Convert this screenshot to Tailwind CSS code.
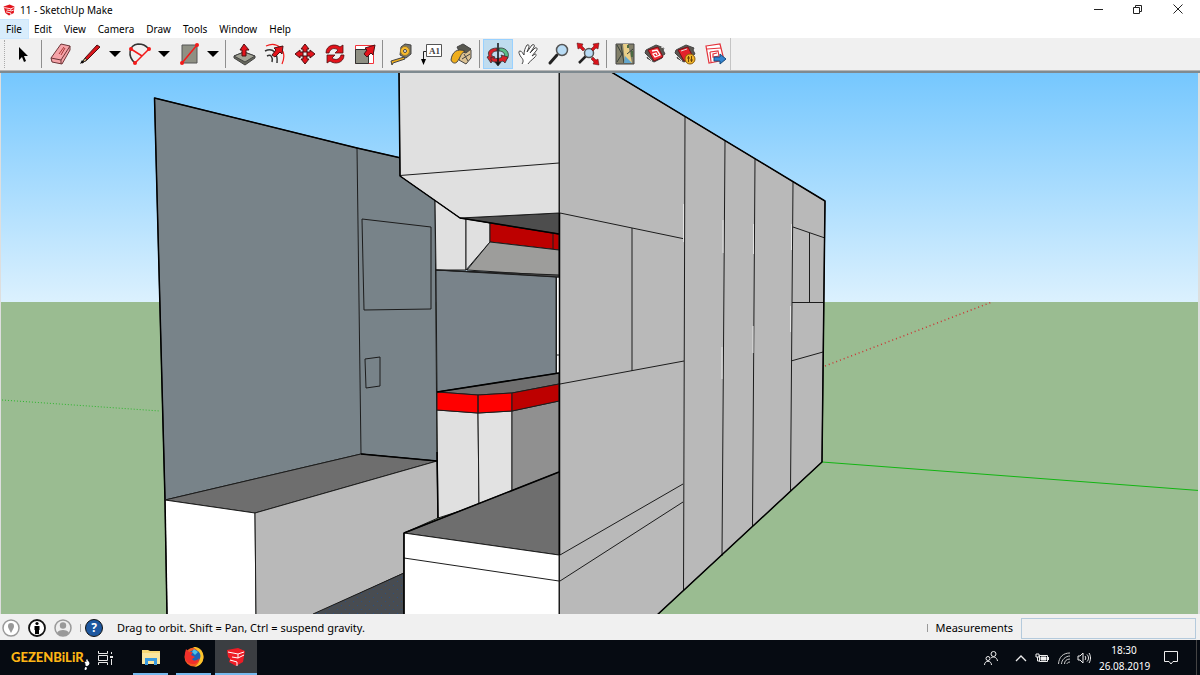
<!DOCTYPE html>
<html lang="en">
<head>
    <meta charset="UTF-8">
    <meta name="viewport" content="width=device-width, initial-scale=1.0">
    <title>11 - SketchUp Make</title>
    <script src="https://cdn.jsdelivr.net/npm/@tailwindcss/browser@4"></script>
</head>
<body class="flex min-h-screen flex-col bg-[#f0f0f0] font-['Noto_Sans',sans-serif] text-[11px] text-black">

    <!-- Title bar -->
    <header class="flex h-5 items-center bg-white pr-[2px] pl-[3px] text-[10px]">
        <svg class="h-3 w-3" viewBox="0 0 20 20">
            <path d="M1 4l10-3 8 3-1 11-8 4-6-4z" fill="#e3131b"/>
            <path d="M2 6l11 2v3L6 10M5 13l8 2v3M13 8l5-2M13 12l5-2" fill="none" stroke="#fff" stroke-width="1.500"/>
        </svg>
        <h1 class="ml-[5px] leading-5">11 - SketchUp Make</h1>
        <div class="ml-auto flex">
            <button class="flex h-5 w-10 items-center justify-center" aria-label="Minimize">
                <svg class="h-3 w-3" viewBox="0 0 12 12" fill="none" stroke="#222"><path d="M2 5.500h9"/></svg>
            </button>
            <button class="flex h-5 w-10 items-center justify-center" aria-label="Restore">
                <svg class="h-3 w-3" viewBox="0 0 12 12" fill="none" stroke="#222"><path d="M1.500 3.500h6v6h-6zM3.500 3V1.500h6v6H8"/></svg>
            </button>
            <button class="flex h-5 w-10 items-center justify-center" aria-label="Close">
                <svg class="h-3 w-3" viewBox="0 0 12 12" fill="none" stroke="#222"><path d="M1.500 .5l9 9M10.500 .5l-9 9"/></svg>
            </button>
        </div>
    </header>

    <!-- Menu -->
    <nav class="flex h-[18px] bg-white text-[10px] leading-[17px]">
        <button class="bg-[#d9edfc] px-[6px] outline outline-[#cce8ff]">File</button>
        <button class="px-[6px]">Edit</button>
        <button class="px-[6px]">View</button>
        <button class="px-[6px]">Camera</button>
        <button class="px-[6px]">Draw</button>
        <button class="px-[6px]">Tools</button>
        <button class="px-[6px]">Window</button>
        <button class="px-[6px]">Help</button>
    </nav>

    <!-- Toolbar -->
    <div class="flex h-[33px] border-b border-[#b5b5b5]">
        <div class="flex items-center border-r border-[#c4c4c4] pl-1" role="toolbar" aria-label="Getting Started">
            <span class="h-7 w-1 border-l border-dotted border-[#aaa]"></span>
            <button class="flex h-[30px] w-[30px] items-center justify-center" aria-label="Select">
                <svg class="h-6 w-6" viewBox="0 0 24 24"><path d="M8 5v13l3-3 2 5 2-1-2-5h4z" fill="#000"/></svg>
            </button>
            <span class="mx-[3px] h-7 w-px bg-[#8f8f8f]"></span>
            <button class="flex h-[30px] w-[30px] items-center justify-center" aria-label="Eraser">
                <svg class="h-6 w-6" viewBox="0 0 24 24" stroke="#6d3437">
                    <path d="M3 16 13 2l9 2v4l-8 14-10-2z" fill="#f5a3a8"/>
                    <path d="M3 16l10 2 9-14M13 18v4" fill="none"/>
                    <path d="M11 12l5-7M13 13l4-7" fill="none" stroke="#a33"/>
                </svg>
            </button>
            <button class="flex h-[30px] w-[30px] items-center justify-center" aria-label="Line">
                <svg class="h-6 w-6" viewBox="0 0 24 24">
                    <path d="M4 21l3-5L19 3l3 2L9 18z" fill="#d9151b" stroke="#4c1113"/>
                    <path d="M4 21l3-5 2 2z" fill="#e0b676" stroke="#333"/>
                    <path d="M2 22l2-4 2 2z" fill="#000"/>
                </svg>
            </button>
            <button class="flex h-[30px] w-[19px] items-center justify-center" aria-label="Line options">
                <svg class="h-[6px] w-3" viewBox="0 0 12 6"><path d="M0 0h12L6 6z"/></svg>
            </button>
            <button class="flex h-[30px] w-[30px] items-center justify-center" aria-label="Arc">
                <svg class="h-6 w-6" viewBox="0 0 24 24" fill="none">
                    <path d="M8 21C0 14 2 3 11 2c5 0 7 1 11 5" stroke="#333" stroke-width="1.500"/>
                    <path d="M8 21 22 7M4 7l11 7" stroke="#f21b1b" stroke-width="1.500"/>
                    <g fill="#f21b1b"><circle cx="8" cy="21" r="2"/><circle cx="22" cy="7" r="2"/><circle cx="4" cy="7" r="2"/></g>
                </svg>
            </button>
            <button class="flex h-[30px] w-[19px] items-center justify-center" aria-label="Arc options">
                <svg class="h-[6px] w-3" viewBox="0 0 12 6"><path d="M0 0h12L6 6z"/></svg>
            </button>
            <button class="flex h-[30px] w-[30px] items-center justify-center" aria-label="Rectangle">
                <svg class="h-6 w-6" viewBox="0 0 24 24">
                    <path d="M6 3h15v18H6z" fill="#8f9084" stroke="#555"/>
                    <path d="M6 21 21 3" stroke="#f21b1b" stroke-width="1.500"/>
                    <g fill="#f21b1b"><circle cx="6" cy="21" r="2"/><circle cx="21" cy="3" r="2"/></g>
                </svg>
            </button>
            <button class="flex h-[30px] w-[19px] items-center justify-center" aria-label="Shape options">
                <svg class="h-[6px] w-3" viewBox="0 0 12 6"><path d="M0 0h12L6 6z"/></svg>
            </button>
            <span class="mx-[3px] h-7 w-px bg-[#8f8f8f]"></span>
            <button class="flex h-[30px] w-[30px] items-center justify-center" aria-label="Push/Pull">
                <svg class="h-6 w-6" viewBox="0 0 24 24" stroke="#444">
                    <path d="M2 14l10-4 11 4v2l-10 7L2 16z" fill="#66675c"/>
                    <path d="M2 14l10-4 11 4-10 6z" fill="#a3a496"/>
                    <path d="M10 14V8H8l4-6 5 6h-3v6z" fill="#e3131b" stroke="#4c1113"/>
                </svg>
            </button>
            <button class="flex h-[30px] w-[30px] items-center justify-center" aria-label="Offset">
                <svg class="h-6 w-6" viewBox="0 0 24 24" fill="none">
                    <path d="M4 4C15-1 26 8 20 22" stroke="#f21b1b" stroke-width="1.200"/>
                    <path d="M3 9c8-4 13 2 12 12M5 14c4-2 6 1 5 6" stroke="#333" stroke-width="1.500"/>
                    <path d="M10 13l4-5-2-2 9-2-1 8-2-2-5 5z" fill="#e3131b" stroke="#4c1113"/>
                </svg>
            </button>
            <button class="flex h-[30px] w-[30px] items-center justify-center" aria-label="Move">
                <svg class="h-6 w-6" viewBox="0 0 24 24" fill="#e3131b" stroke="#4c1113">
                    <path d="M13 2l4 5h-2v3h-4V7H9zM13 22l4-5h-2v-3h-4v3H9zM3 12l5-4v2h3v4H8v2zM23 12l-5-4v2h-3v4h3v2z"/>
                </svg>
            </button>
            <button class="flex h-[30px] w-[30px] items-center justify-center" aria-label="Rotate">
                <svg class="h-6 w-6" viewBox="0 0 24 24" fill="#e3131b" stroke="#4c1113" stroke-width=".8">
                    <path d="M4 11C4 3 13 1 18 5l3-2v8h-8l3-3c-4-3-8-1-9 3z"/>
                    <path d="M22 13c0 8-9 10-14 6l-3 2v-8h8l-3 3c4 3 8 1 9-3z"/>
                </svg>
            </button>
            <button class="flex h-[30px] w-[30px] items-center justify-center" aria-label="Scale">
                <svg class="h-6 w-6" viewBox="0 0 24 24">
                    <path d="M3.500 3.500h18v18h-18z" fill="#fff" stroke="#f3333b"/>
                    <path d="M3.500 7.500h13v14h-13z" fill="#8f9084" stroke="#333"/>
                    <path d="M12 12l3-4-2-2 10-3-2 10-2-2-4 4z" fill="#e3131b" stroke="#4c1113"/>
                </svg>
            </button>
            <span class="mx-[3px] h-7 w-px bg-[#8f8f8f]"></span>
            <button class="flex h-[30px] w-[30px] items-center justify-center" aria-label="Tape Measure">
                <svg class="h-6 w-6" viewBox="0 0 24 24" stroke="#444">
                    <path d="M2 19l13-4 1 2-12 4-1 2z" fill="#efae1c"/>
                    <path d="M12 5l4-3 6 1v9l-5 4-6-3z" fill="#777569"/>
                    <circle cx="16" cy="9" r="4.500" fill="#f7ba2e" stroke="#9b7a2a"/><circle cx="16" cy="9" r="1.500" fill="#fff"/>
                </svg>
            </button>
            <button class="flex h-[30px] w-[30px] items-center justify-center" aria-label="Text">
                <svg class="h-6 w-6" viewBox="0 0 24 24">
                    <path d="M7.500 2.500h15v12h-15z" fill="#fff" stroke="#555"/>
                    <path d="M7 9.500H4.500V19" fill="none" stroke="#222"/><path d="M2 17h5l-2.500 6z"/>
                    <text x="10" y="12" font-family="Liberation Serif" font-size="9" font-weight="700" fill="#444">A1</text>
                </svg>
            </button>
            <button class="flex h-[30px] w-[30px] items-center justify-center" aria-label="Paint Bucket">
                <svg class="h-6 w-6" viewBox="0 0 24 24" stroke="#444">
                    <path d="M10 9l5-6 7 5v8l-5 6-7-4z" fill="#dcc293"/>
                    <path d="M8 5l6-3 8 5-5 4-7-2z" fill="#575750"/>
                    <path d="M2 18C3 10 8 6 16 9c-5 3-4 6-8 11-2 2-5 1-6-2z" fill="#efae1c"/>
                    <path d="M13 17l8-5M15 12l4 7" fill="none"/>
                </svg>
            </button>
            <span class="mx-[3px] h-7 w-px bg-[#8f8f8f]"></span>
            <button class="flex h-[30px] w-[30px] items-center justify-center border border-[#99d1ff] bg-[#bfdcef]" aria-label="Orbit">
                <svg class="h-6 w-6 shrink-0" viewBox="0 0 24 24" stroke="#333" stroke-width=".8">
                    <path d="M13 6c9-1 12 8 7 12l-4-1v-3l2 1c2-3-1-6-5-6z" fill="#58bd86"/>
                    <path d="M11 6C4 6 1 10 3 14l-2 1 4 6 4-6-3-1c-1-2 1-5 5-5z" fill="#d82128"/>
                    <path d="M5 15c4 2 8 2 11 0l-1-2 7 2-3 6-2-2c-5 2-9 2-12-1z" fill="#d82128"/>
                    <path d="M12 1v21" stroke="#111" stroke-width="1.500"/>
                    <path d="M9 20h6l-3 4z" fill="#111"/>
                </svg>
            </button>
            <button class="flex h-[30px] w-[30px] items-center justify-center" aria-label="Pan">
                <svg class="h-6 w-6" viewBox="0 0 24 24">
                    <path d="M6 22c2-3 1-5-1-7-2-3-3-6-1-6 2 0 3 3 4 4 0-4 1-7 3-10 2-1 2 1 2 2l-2 5 5-7c2-1 3 0 2 2l-4 6 5-5c2-1 3 1 1 3l-4 5 3-2c2 0 1 2 0 3-3 3-6 5-7 7" fill="#fff" stroke="#444"/>
                </svg>
            </button>
            <button class="flex h-[30px] w-[30px] items-center justify-center" aria-label="Zoom">
                <svg class="h-6 w-6" viewBox="0 0 24 24">
                    <path d="M4 21l7-8" stroke="#222" stroke-width="3" stroke-linecap="round"/>
                    <circle cx="16" cy="8" r="5.500" fill="#b9dcf5" stroke="#555" stroke-width="1.500"/>
                </svg>
            </button>
            <button class="flex h-[30px] w-[30px] items-center justify-center" aria-label="Zoom Extents">
                <svg class="h-6 w-6" viewBox="0 0 24 24">
                    <path d="M3 21l7-7" stroke="#222" stroke-width="2.500"/>
                    <circle cx="13" cy="11" r="4.500" fill="#b9dcf5" stroke="#555" stroke-width="1.500"/>
                    <path d="M1 1l6 1-1 2 3 3-2 2-3-3-2 1zM23 1l-6 1 1 2-3 3 2 2 3-3 2 1zM23 23l-6-1 1-2-3-3 2-2 3 3 2-1z" fill="#d9131b" stroke="#4c1113" stroke-width=".5"/>
                </svg>
            </button>
            <span class="mx-[3px] h-7 w-px bg-[#8f8f8f]"></span>
            <button class="flex h-[30px] w-[30px] items-center justify-center" aria-label="Add Location">
                <svg class="h-6 w-6" viewBox="0 0 24 24">
                    <path d="M3 2h18v20H3z" fill="#83806a" stroke="#444"/>
                    <path d="M10 2h5l4 19h-7z" fill="#e9cf88"/>
                    <path d="M4 3l5 9-5 8M8 3l3 18M14 12l6-5" fill="none" stroke="#37403a"/>
                    <path d="M12 14l7 7h-8z" fill="#63a7cf"/>
                    <path d="M14 3h2v3h-2zM18 9h2v6h-2z" fill="#4b6b42"/>
                </svg>
            </button>
            <button class="flex h-[30px] w-[30px] items-center justify-center" aria-label="3D Warehouse">
                <svg class="h-6 w-6" viewBox="0 0 24 24" stroke="#444">
                    <path d="M3 8l10-5 8 3-1 2 2 4-3 2v2l-8 4-7-4 1-2-3-3z" fill="#5b5751"/>
                    <path d="M5 8l10-3 5 10-9 4z" fill="#ee2932" stroke="#7a1015"/>
                    <path d="M9 9l5-1 3 5-5 2-2-3 3-1 1 2" fill="none" stroke="#fff" stroke-width="1.300"/>
                    <path d="M4 14l5 5M18 5l3 1" stroke="#ddd"/>
                </svg>
            </button>
            <button class="flex h-[30px] w-[30px] items-center justify-center" aria-label="Extension Warehouse">
                <svg class="h-6 w-6" viewBox="0 0 24 24" stroke="#444">
                    <path d="M3 8l10-5 8 3-1 2 2 4-3 2v2l-8 4-7-4 1-2-3-3z" fill="#5b5751"/>
                    <path d="M5 8l10-3 5 10-9 4z" fill="#e3222b" stroke="#7a1015"/>
                    <path d="M8 9l6-2M4 14l5 5" stroke="#ddd"/>
                    <circle cx="17" cy="17" r="5" fill="#f2b52a" stroke="#8a5c0b"/>
                    <path d="M15.500 14v6M18.500 14v6M14 16h3M17 18h3" fill="none" stroke="#6a450a"/>
                </svg>
            </button>
            <button class="flex h-[30px] w-[30px] items-center justify-center" aria-label="LayOut">
                <svg class="h-6 w-6" viewBox="0 0 24 24">
                    <path d="M3 4l14-2 4 16-15 3z" fill="#fff" stroke="#e3333b" stroke-width="1.200"/>
                    <path d="M4 7l14-1M7 10l8-1 1 5-6 1v-3l4-1M7 10l1 10" fill="none" stroke="#e3333b" stroke-width="1.200"/>
                    <path d="M11 15h6v-3l6 5-6 5v-3h-6z" fill="#3385d0" stroke="#164a7c"/>
                </svg>
            </button>
        </div>
    </div>

    <!-- Model viewport -->
    <main class="flex flex-1 border-t-2 border-[#7f8a90] bg-[#dedede] pr-[2px] pl-px">
        <svg class="h-[541px] min-h-full w-full" viewBox="1 73 1197 541" preserveAspectRatio="none" role="img" aria-label="3D model">
            <defs>
                <linearGradient id="sky" x1="0" y1="0" x2="0" y2="1">
                    <stop offset="0" stop-color="#75c7fe"/>
                    <stop offset="1" stop-color="#dcf1fe"/>
                </linearGradient>
                <pattern id="dots" width="8" height="8" patternUnits="userSpaceOnUse">
                    <path d="M0 0h8v8H0z" fill="#484c51"/>
                    <path d="M1 1h1v1H1zM5 5h1v1H5z" fill="#2c4f7e"/>
                </pattern>
            </defs>
            <path d="M0 72h1200v231H0z" fill="url(#sky)"/>
            <path d="M0 302h1200v313H0z" fill="#9abc91"/>

            <!-- axes -->
            <path d="M2 400 160 411" stroke="#2cb52c" stroke-dasharray="1 2"/>
            <path d="M822 462 1199 490.500" stroke="#12b512"/>
            <path d="M825 366 992 302" stroke="#c33" stroke-dasharray="1 3" stroke-width="1.500"/>

            <g stroke="#1c1c1c" stroke-linejoin="round">
                <!-- left wall -->
                <path d="M154.500 98 357 148l44 10v18l34 23 2 262-76-7-196 46z" fill="#788389"/>
                <path d="M357 148l4 306M362 219l69 8v82l-67 1zM365 359l15-2v29l-14 2z" fill="none"/>
                <path d="M165 500 154.500 98 357 148l44 10" fill="none" stroke="#000" stroke-width="1.500"/>

                <!-- left bench -->
                <path d="M165 500l196-46 76 7-182 52z" fill="#6e6e6e"/>
                <path d="M165 500l90 13 1 102h-89z" fill="#fff"/>
                <path d="M255 513l182-52 1 57-34 15v40l-91 42h-57z" fill="#b9b9b9"/>
                <path d="M313 614l91-41v42h-91z" fill="url(#dots)"/>
                <path d="M165 500l2 115" stroke="#000" stroke-width="1.500"/>

                <!-- back opening -->
                <path d="M436 270l120 7v97l-119 18z" fill="#79838a"/>
                <path d="M556.500 277h3v97h-3zM556 355h3" fill="#fff"/>

                <!-- hood -->
                <path d="M435 199l31 20v51h-30z" fill="#e0e0e0"/>
                <path d="M466 218l24 5v19l-24 28z" fill="#e0e0e0"/>
                <path d="M490 223l69 11v16l-69-8z" fill="#bd0000"/>
                <path d="M490 242l69 8v26l-92-6z" fill="#9d9d9b"/>
                <path d="M553 234v15"/>
                <path d="M436 270l123 5v2l-63-4z" fill="#555"/>
                <path d="M460 218l99-5v21z" fill="#4d4d4d"/>

                <!-- upper cabinet -->
                <path d="M399 70h160v143l-99 5-60-42z" fill="#e0e0e0"/>
                <path d="M400 175.500l159-12.500"/>
                <path d="M399 70l1 106 60 42 99 16" fill="none" stroke="#000" stroke-width="1.500"/>

                <!-- red counter -->
                <path d="M437 392l122-19v11l-47 9-34 2z" fill="#6f6f6f"/>
                <path d="M437 410l41 3 1 92-41 13z" fill="#e0e0e0"/>
                <path d="M478 413l34-2v82l-33 13z" fill="#e2e2e2"/>
                <path d="M512 411l47-10v75l-47 18z" fill="#909090"/>
                <path d="M437 392l41 3v18l-41-3zM478 395l34-2v18l-34 2z" fill="#f00"/>
                <path d="M512 393l47-9v17l-47 10z" fill="#bd0000"/>
                <path d="M437 392l122-19M437 452l1 66M361 454l76 7" stroke="#000" stroke-width="1.500" fill="none"/>

                <!-- front bench -->
                <path d="M404 533l155-61v83z" fill="#6e6e6e"/>
                <path d="M404 533l155 22v60H404z" fill="#fff"/>
                <path d="M404 558l155 23"/>
                <path d="M404 615v-82l155-61" fill="none" stroke="#000" stroke-width="1.500"/>

                <!-- right wall -->
                <path d="M559.500 70H608l217 131-3 261-166 154h-96.500z" fill="#b9b9b9"/>
                <g fill="none">
                    <path d="M685 117l-1.500 474M725 141l-3 415M755 159l-2.500 368M793 182l-2.500 309"/>
                    <path d="M560 213l125 26M632 228v143M560 384l124-23M560 555l123-71M560 581l123-79"/>
                    <path d="M793 227l32 11M809.500 233v70M792 302.500h32M791 361l32-9"/>
                </g>
                <path d="M683.500 204v38M723 220v33M753.500 224v30M791.500 224v26M722 347v32M753 326v27M790.500 306v26" stroke="#e2e2e2"/>
                <path d="M608 70l217 131-3 261-166 154M559.500 213v342" fill="none" stroke="#000" stroke-width="1.500"/>
            </g>
        </svg>
    </main>

    <!-- Status bar -->
    <div class="flex h-[26px] items-center pt-[2px] pr-1 pl-[2px]">
        <button class="mr-2 h-[18px] w-[18px]" aria-label="Geo-location">
            <svg viewBox="0 0 18 18"><circle cx="9" cy="9" r="8" fill="#fff" stroke="#999" stroke-width="1.500"/><path d="M9 14C7 10 6 9 6 7a3 3 0 0 1 6 0c0 2-1 3-3 7z" fill="#999"/></svg>
        </button>
        <button class="mr-2 h-[18px] w-[18px]" aria-label="Credits">
            <svg viewBox="0 0 18 18"><circle cx="9" cy="9" r="8" fill="#fff" stroke="#111" stroke-width="1.800"/><circle cx="9" cy="4.500" r="1.600"/><path d="M6.500 7h5v4H11v4H7v-4h-.5z"/></svg>
        </button>
        <button class="mr-2 h-[18px] w-[18px]" aria-label="Sign in">
            <svg viewBox="0 0 18 18"><circle cx="9" cy="9" r="8" fill="#eee" stroke="#999" stroke-width="1.500"/><circle cx="9" cy="6.500" r="3.200" fill="#999"/><path d="M3 14c1-4 11-4 12 0-3 4-9 4-12 0z" fill="#999"/></svg>
        </button>
        <span class="mr-1 h-2 w-px bg-[#aaa]"></span>
        <button class="h-[18px] w-[18px] rounded-full border border-[#111] bg-[#1d579f] text-[12px] leading-4 font-bold text-white" aria-label="Help">?</button>
        <p class="ml-[14px]">Drag to orbit. Shift = Pan, Ctrl = suspend gravity.</p>
        <span class="ml-auto h-2 w-px bg-[#999]"></span>
        <label for="measurements" class="mx-2">Measurements</label>
        <input id="measurements" type="text" class="h-[21px] w-[175px] border border-[#b4cadc] bg-[#f0f0f0] px-1">
    </div>

    <!-- Taskbar -->
    <footer class="flex h-[35px] items-center bg-[#060b12] pl-[11px] text-[10px] text-white">
        <button class="flex w-[78px] items-center justify-between font-['Lato',sans-serif] text-[13px] font-black text-[#fdb515]" aria-label="Start">GEZENBiLiR
            <svg class="mt-3 h-3 w-[6px] shrink-0" viewBox="0 0 8 16"><path d="M2 10c-1-5 3-8 5-4 1 2-1 4-3 5zM2 12c2 0 3 3 0 4-2 0-1-3 0-4zM1 5h2v2H1zM3 2h2v2H3z" fill="#fff"/></svg>
        </button>
        <button class="ml-2 h-4 w-4" aria-label="Task View">
            <svg viewBox="0 0 16 16" fill="none" stroke="#e8e8e8"><path d="M1.500 1v2.500h9V1M1.500 5.500h9v5h-9zM1.500 15v-2.500h9V15M14.500 2v2M14.500 9v6"/><path d="M13 6h3v2h-3z" fill="#e8e8e8" stroke="none"/></svg>
        </button>
        <button class="ml-5 flex h-full w-[35px] items-center justify-center border-b-2 border-[#76b9ed]" aria-label="File Explorer">
            <svg class="h-5 w-5" viewBox="0 0 20 20"><path d="M1 3h6l2 1h10v13H1z" fill="#f9d976"/><path d="M1 6h18v11H1z" fill="#fbe69f"/><path d="M4 18v-7h12v7h-3v-4H7v4z" fill="#3a9be0"/></svg>
        </button>
        <button class="ml-2 flex h-full w-[35px] items-center justify-center border-b-2 border-[#76b9ed]" aria-label="Firefox">
            <svg class="h-5 w-5" viewBox="0 0 20 20">
                <circle cx="10" cy="10" r="9.500" fill="#f15b22"/>
                <path d="M9 0c8-1 12 7 10 13-1 4-5 7-9 7 7-4 9-14-1-20z" fill="#fbc52b"/>
                <circle cx="10.500" cy="9" r="6" fill="#1c63b7"/>
                <path d="M1 6l1-4 3 3 4 0-2 3 4 2-3 2c2 3 6 1 7-1 0 4-3 6-6 6C2 17 0 11 1 6z" fill="#f0302b"/>
                <path d="M8 5l2-3 4 3-3 3z" fill="#4cc0e8"/>
            </svg>
        </button>
        <button class="ml-1 flex h-full w-[42px] items-center justify-center border-b-2 border-[#76b9ed] bg-[#3b3e42]" aria-label="SketchUp">
            <svg class="h-5 w-5" viewBox="0 0 20 20">
                <path d="M1 3l11-2 7 3-2 11-7 4-7-4 1-3-2-2z" fill="#ee1c25"/>
                <path d="M2 5l10 2v4l-6-1M4 13l7 2v4M12 7l6-2M12 11l6-3" fill="none" stroke="#fff"/>
            </svg>
        </button>
        <div class="ml-auto flex h-full items-center">
            <button class="mr-4 h-4 w-4" aria-label="People">
                <svg viewBox="0 0 16 16" fill="none" stroke="#eee"><circle cx="10.500" cy="4" r="2.500"/><circle cx="5" cy="8.500" r="2"/><path d="M1.500 15c0-5 7-5 7 0M8 8c2-2 6-1 6.500 3"/></svg>
            </button>
            <button class="mr-2 h-3 w-3" aria-label="Show hidden icons">
                <svg viewBox="0 0 12 12" fill="none" stroke="#eee" stroke-width="1.300"><path d="M1 9l5-5 5 5"/></svg>
            </button>
            <svg class="mr-2 h-[14px] w-[14px]" viewBox="0 0 14 14" fill="none" stroke="#eee"><path d="M4.500 4.500h8v6h-8zM13.500 6v3M1 3h3v3H1z"/><path d="M6 6h5v3H6z" fill="#eee"/><path d="M2.500 6v4h2"/></svg>
            <svg class="mr-[6px] h-[14px] w-[14px]" viewBox="0 0 14 14" fill="none" stroke="#ccc"><path d="M1.500 13C2 6 6 2 13 2M4.500 13c0-4 4-8 8.500-8M7.500 13c0-3 2-5 5.500-5M10 13c0-1 1-2 3-2"/></svg>
            <svg class="mr-2 h-[14px] w-[14px]" viewBox="0 0 14 14" fill="none" stroke="#eee"><path d="M1 5h2l3-3v10L3 9H1zM8 5c1 1 1 3 0 4M10 3.500c2 2 2 5 0 7M12 2c2 3 2 7 0 10"/></svg>
            <time class="w-[50px] text-center leading-4">18:30<br>26.08.2019</time>
            <button class="mr-[17px] ml-[14px] h-4 w-4" aria-label="Notifications">
                <svg viewBox="0 0 16 16" fill="none" stroke="#eee"><path d="M1.500 1.500h13v10H10l-2 2.500-2-2.500H1.500z"/></svg>
            </button>
            <span class="mr-[3px] h-full w-px bg-[#444]"></span>
        </div>
    </footer>
</body>
</html>
